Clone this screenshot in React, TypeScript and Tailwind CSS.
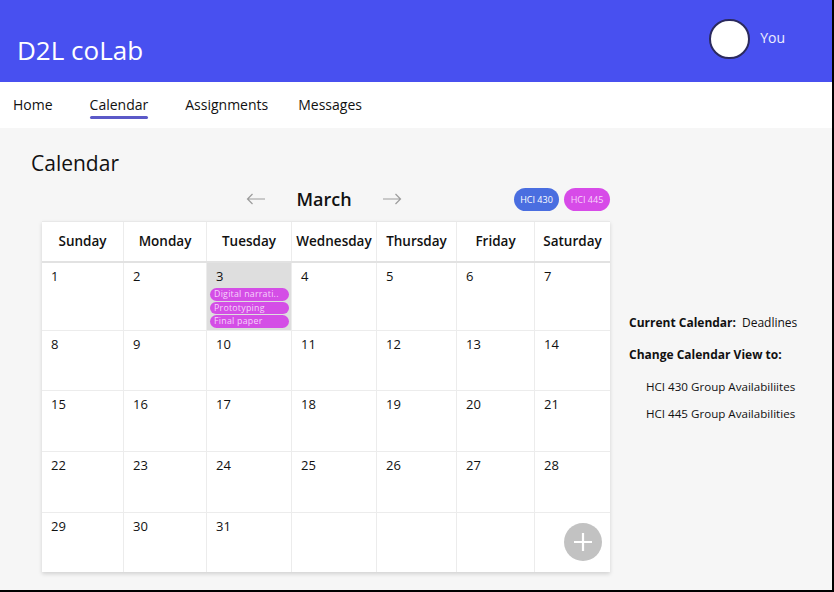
import React from 'react';

const DAYS = ['Sunday', 'Monday', 'Tuesday', 'Wednesday', 'Thursday', 'Friday', 'Saturday'];

// March starts on a Sunday, 31 days, 5 rows
const WEEKS: (number | null)[][] = [
  [1, 2, 3, 4, 5, 6, 7],
  [8, 9, 10, 11, 12, 13, 14],
  [15, 16, 17, 18, 19, 20, 21],
  [22, 23, 24, 25, 26, 27, 28],
  [29, 30, 31, null, null, null, null],
];

const ROW_HEIGHTS = ['h-[67px]', 'h-[59px]', 'h-[60px]', 'h-[60px]', 'h-[59px]'];

const EVENTS: Record<number, string[]> = {
  3: ['Digital narrati..', 'Prototyping', 'Final paper'],
};

const NAV = [
  { label: 'Home', cls: '' },
  { label: 'Calendar', cls: 'ml-[37px]' },
  { label: 'Assignments', cls: 'ml-[37px]' },
  { label: 'Messages', cls: 'ml-[30px]' },
];

const Arrow: React.FC<{ dir: 'left' | 'right' }> = ({ dir }) => (
  <svg width="20" height="12" viewBox="0 0 20 12" className={dir === 'right' ? 'rotate-180' : ''}>
    <path d="M19 6H1.5M6.5 1L1.5 6l5 5" stroke="#9c9c9c" strokeWidth="1.2" fill="none" />
  </svg>
);

const App: React.FC = () => {
  return (
    <div
      className="w-[834px] h-[592px] flex flex-col overflow-hidden border-r-2 border-b-2 border-black bg-[#f6f6f6] text-[#111]"
      style={{ fontFamily: '"Open Sans", "Noto Sans", sans-serif' }}
    >
      {/* Top banner */}
      <header className="h-[82px] shrink-0 bg-[#4850f0] flex items-center justify-between pl-[17px] pr-[47px]">
        <h1 className="text-[26px] text-white pt-[18px]">D2L coLab</h1>
        <div className="flex items-center gap-[10px] -mt-[5px]">
          <div className="w-[41px] h-[40px] rounded-full bg-white border-2 border-[#2b2a5e]" />
          <span className="text-[14px] text-white/90 -mt-[2px]">You</span>
        </div>
      </header>

      {/* Tabs */}
      <nav className="h-[46px] shrink-0 bg-white flex items-center pl-[13px] text-[14px]">
        {NAV.map(item => (
          <div key={item.label} className={`relative -mt-[1px] ${item.cls}`}>
            <span>{item.label}</span>
            {item.label === 'Calendar' && (
              <div className="absolute left-0 right-0 -bottom-[4px] h-[3px] bg-[#5b59c8] rounded-full" />
            )}
          </div>
        ))}
      </nav>

      <main className="flex-1 flex">
        <div className="w-[610px] shrink-0">
          <h2 className="pl-[31px] pt-[21px] text-[21px] leading-[28px]">Calendar</h2>

          {/* Month switcher + course chips */}
          <div className="ml-[42px] w-[568px] h-[28px] mt-[8px] relative flex items-center justify-center">
            <div className="flex items-center gap-[30px] -ml-[4px]">
              <Arrow dir="left" />
              <span className="text-[18px] font-semibold">March</span>
              <Arrow dir="right" />
            </div>
            <div className="absolute right-0 top-[3px] flex gap-[5px]">
              <span className="w-[45px] h-[23px] rounded-full bg-[#4a6ee0] text-white text-[9px] flex items-center justify-center">
                HCI 430
              </span>
              <span className="w-[46px] h-[23px] rounded-full bg-[#d74be8] text-[#f7d6fb] text-[9px] flex items-center justify-center">
                HCI 445
              </span>
            </div>
          </div>

          {/* Calendar grid */}
          <div className="ml-[42px] mt-[8px] w-[568px] bg-white shadow-[0_2px_4px_rgba(0,0,0,0.15)] relative border-t border-[#e8e8e8]">
            <div className="grid grid-cols-[82px_83px_85px_85px_80px_78px_75px] border-b-2 border-[#e2e2e2]">
              {DAYS.map((d, i) => (
                <div
                  key={d}
                  className={`h-[39px] flex items-center justify-center text-[13.5px] font-semibold ${i < 6 ? 'border-r border-[#ececec]' : ''}`}
                >
                  {d}
                </div>
              ))}
            </div>
            {WEEKS.map((week, r) => (
              <div
                key={r}
                className={`grid grid-cols-[82px_83px_85px_85px_80px_78px_75px] ${r < 4 ? 'border-b border-[#ececec]' : ''}`}
              >
                {week.map((day, c) => (
                  <div
                    key={c}
                    className={`${ROW_HEIGHTS[r]} ${c < 6 ? 'border-r border-[#ececec]' : ''} ${day === 3 ? 'bg-[#dedede]' : ''} pt-[5px] pl-[9px]`}
                  >
                    {day !== null && <div className="text-[13px] leading-[16px] font-medium">{day}</div>}
                    {day !== null && EVENTS[day] && (
                      <div className="flex flex-col gap-[1px] mt-[4px] -ml-[6px] w-[79px]">
                        {EVENTS[day].map(ev => (
                          <div
                            key={ev}
                            className="h-[12.5px] rounded-full bg-[#d44ee6] text-[#f6d3fb] text-[8.8px] leading-[12.5px] pl-[4px] tracking-[0.25px] whitespace-nowrap overflow-hidden"
                          >
                            {ev}
                          </div>
                        ))}
                      </div>
                    )}
                  </div>
                ))}
              </div>
            ))}

            {/* Add button */}
            <button className="absolute right-[8px] bottom-[11px] w-[38px] h-[38px] rounded-full bg-[#c2c2c2] flex items-center justify-center">
              <svg width="22" height="22" viewBox="0 0 22 22">
                <path d="M11 2v18M2 11h18" stroke="white" strokeWidth="2.2" />
              </svg>
            </button>
          </div>
        </div>

        {/* Sidebar */}
        <aside className="pl-[19px] pt-[187px] text-[12px] leading-[16px]">
          <div>
            <span className="font-bold">Current Calendar:</span>
            <span className="ml-[6px]">Deadlines</span>
          </div>
          <div className="font-bold mt-[16px]">Change Calendar View to:</div>
          <div className="pl-[17px] mt-[16px] text-[11.6px]">HCI 430 Group Availabiliites</div>
          <div className="pl-[17px] mt-[11px] text-[11.6px]">HCI 445 Group Availabilities</div>
        </aside>
      </main>
    </div>
  );
};

export default App;
